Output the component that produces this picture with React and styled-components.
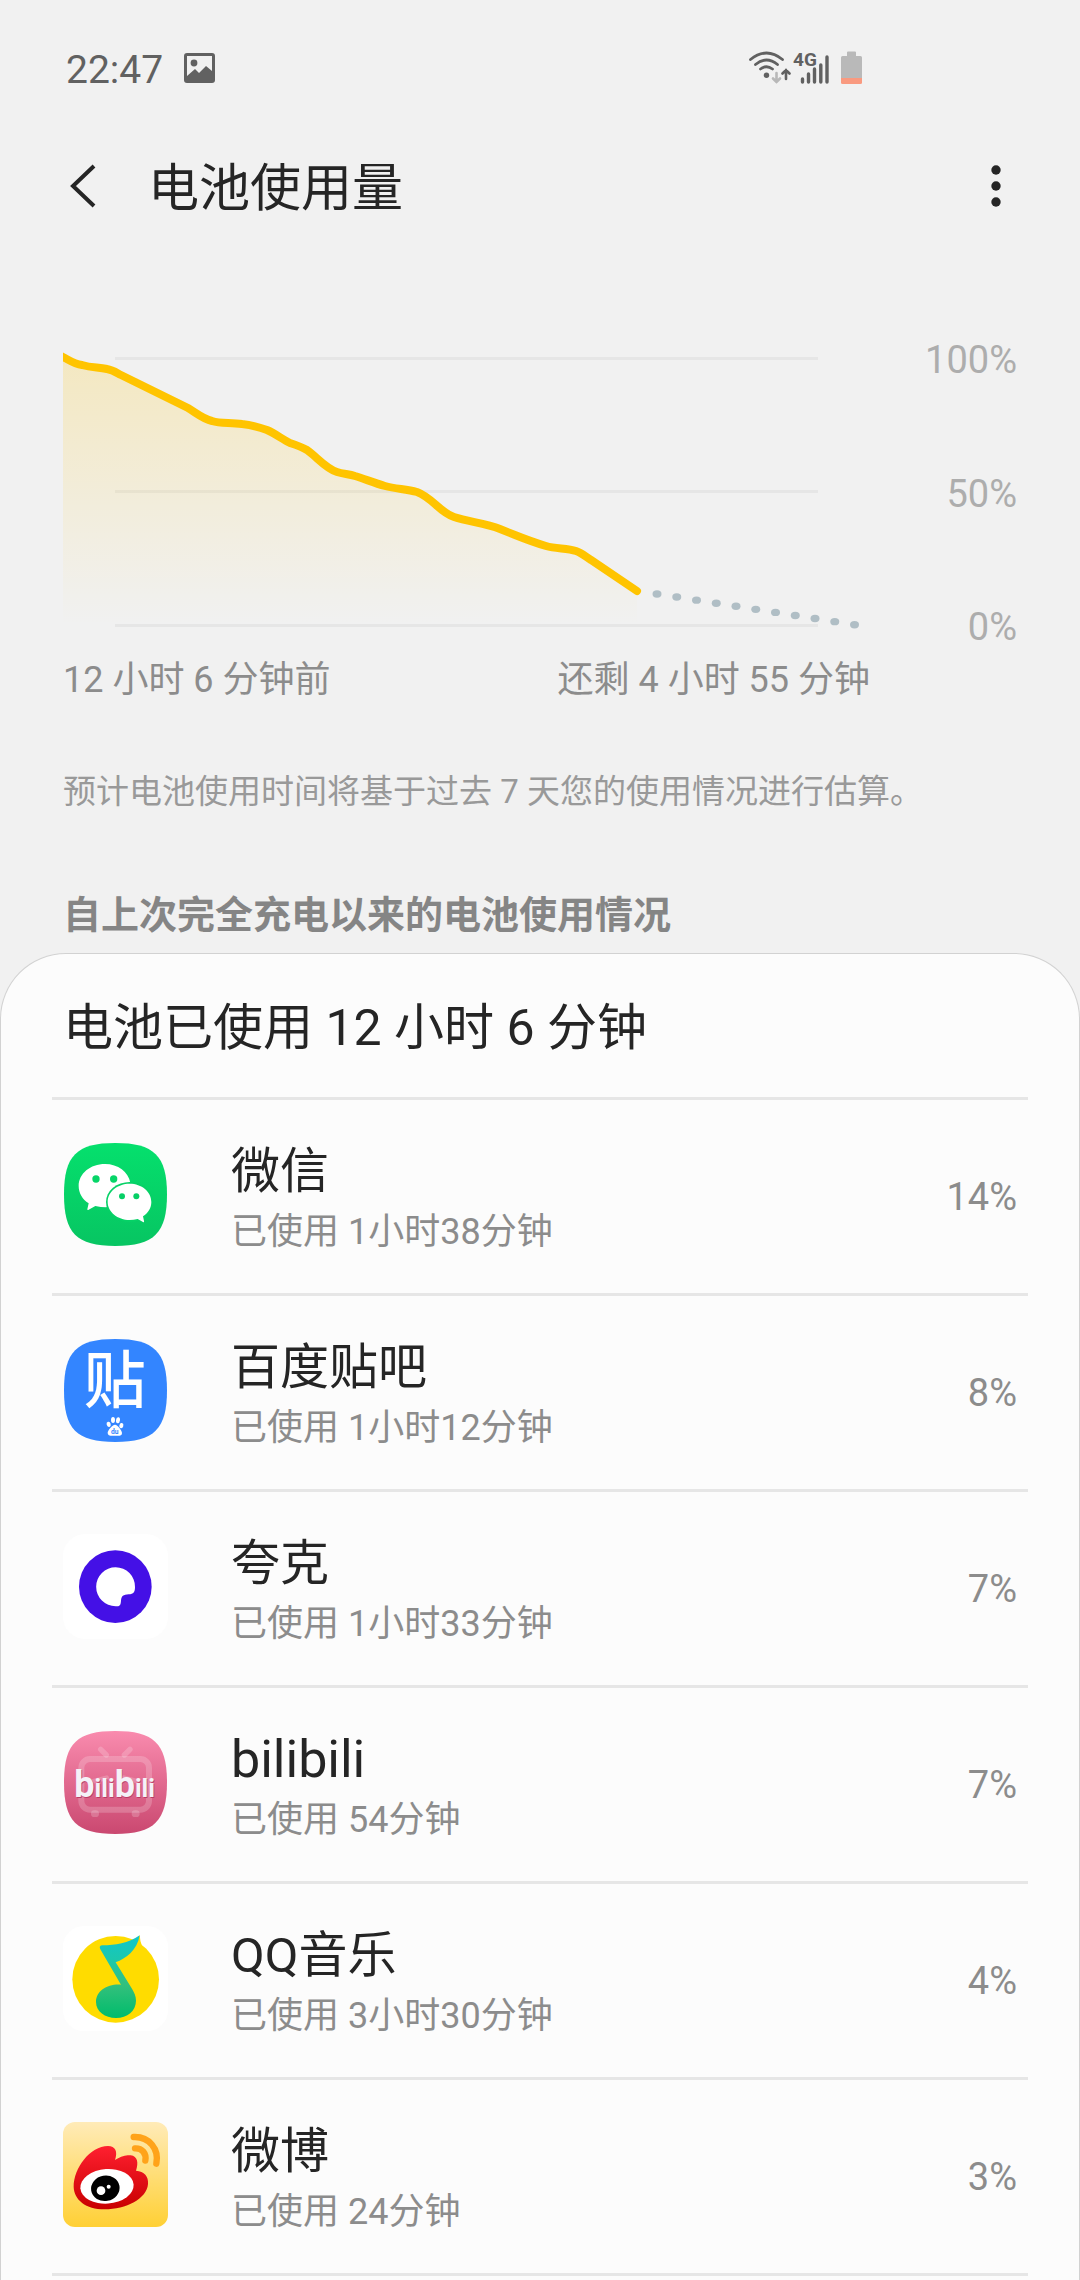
import React from "react";
import styled, { createGlobalStyle } from "styled-components";

const GlobalStyle = createGlobalStyle`
  * { box-sizing: border-box; }
  body {
    margin: 0;
    background: #f1f1f1;
    color: #252525;
    font-family: Roboto, "Noto Sans CJK SC", sans-serif;
  }
  h1, h2, h3, p, ul { margin: 0; padding: 0; font-weight: 400; }
  button {
    border: 0;
    padding: 0;
    background: none;
    color: inherit;
    font: inherit;
    text-align: left;
    cursor: pointer;
  }
  svg { display: block; }
`;

const Page = styled.div`
  display: flex;
  flex-direction: column;
  min-height: 100vh;
`;

const StatusBar = styled.header`
  display: flex;
  align-items: center;
  justify-content: space-between;
  height: 136px;
  padding: 0 218px 0 66px;
  color: #616161;
`;

const StatusGroup = styled.div`
  display: flex;
  align-items: center;
  gap: ${(p) => p.$gap}px;
`;

const Clock = styled.time`
  padding-top: 4px;
  font-size: 39px;
  line-height: 48px;
`;

const TitleBar = styled.div`
  display: flex;
  align-items: center;
  height: 100px;
  padding: 0 64px;
`;

const IconButton = styled.button`
  display: flex;
  align-items: center;
  justify-content: ${(p) => (p.$end ? "flex-end" : "flex-start")};
  width: 84px;
  height: 84px;
`;

const Title = styled.h1`
  flex: 1;
  padding: 6px 0 0 0;
  font-size: 51px;
  line-height: 64px;
`;

const ChartSection = styled.section`
  display: grid;
  grid-template-columns: minmax(0, 1fr) 147px;
  row-gap: 10px;
  padding: 105px 63px 0;
`;

const Scale = styled.div`
  display: flex;
  flex-direction: column;
  justify-content: space-between;
  align-items: flex-end;
  color: #adadad;
  font-size: 38px;
  line-height: 38px;
`;

const Range = styled.div`
  display: flex;
  justify-content: space-between;
  color: #8c8c8c;
  font-size: 36px;
  line-height: 48px;
`;

const Note = styled.p`
  padding: 64px 63px 0;
  color: #999999;
  font-size: 33px;
  line-height: 48px;
`;

const SectionTitle = styled.h2`
  padding: 75px 63px 14px;
  color: #858585;
  font-size: 38px;
  font-weight: 700;
  line-height: 48px;
`;

const Card = styled.section`
  flex: 1;
  padding: 0 51px;
  border: 1px solid #d2d2d2;
  border-bottom: 0;
  border-radius: 66px 66px 0 0;
  background: #fcfcfc;
`;

const CardTitle = styled.h3`
  padding: 42px 11px 37px;
  font-size: 50px;
  line-height: 64px;
`;

const AppList = styled.ul`
  list-style: none;
  border-top: 3px solid #e6e6e6;
`;

const AppItem = styled.li`
  border-bottom: 3px solid #e6e6e6;
`;

const AppRow = styled.button`
  display: flex;
  align-items: center;
  width: 100%;
  height: 193px;
  padding: 0 11px;
`;

const AppIcon = styled.svg`
  flex: none;
  width: 105px;
  height: 105px;
  margin: 0 63px 4px 0;
`;

const AppText = styled.span`
  display: flex;
  flex: 1;
  flex-direction: column;
  padding-top: 7px;
`;

const AppName = styled.span`
  font-size: ${(p) => (p.$latin ? 52 : 49)}px;
  line-height: 64px;
`;

const AppTime = styled.span`
  color: #8c8c8c;
  font-size: 36px;
  line-height: 56px;
`;

const Percent = styled.span`
  color: #8c8c8c;
  font-size: 38px;
  line-height: 48px;
`;

const LINE =
  "M55 353 L63 357 C69 360 74 364 82 365 C92 368 98 367 107 369 C113 370 117 373 121 375 L188 408 C195 412 203 419 212 421 C221 424 231 422 242 424 C252 425 259 427 267 430 C276 434 282 439 290 443 C296 445 302 447 307 450 C317 457 325 468 337 472 C343 474 349 474 355 476 C365 479 374 483 385 486 C396 489 406 489 417 492 C433 498 439 512 454 517 C469 522 485 523 500 529 L515 535 C525 539 536 543 546 546 C556 549 567 548 576 551 C582 553 586 557 591 560 L637 591";

function UsageChart() {
  const dots = Array.from({ length: 11 }, (_, i) => i);
  return (
    <svg viewBox="63 341 807 305" width="100%" role="img" aria-label="电池使用量">
      <defs>
        <linearGradient id="fill" gradientUnits="userSpaceOnUse" x1="0" y1="357" x2="0" y2="625">
          <stop offset="0" stopColor="#ffc400" stopOpacity="0.2" />
          <stop offset="1" stopColor="#ffc400" stopOpacity="0" />
        </linearGradient>
      </defs>
      <path d="M115 358.5H818M115 491.5H818M115 625.5H818" stroke="#e6e6e6" strokeWidth="3" />
      <path d={`${LINE}V625H55Z`} fill="url(#fill)" />
      {dots.map((i) => (
        <ellipse key={i} cx={657 + i * 19.75} cy={594 + i * 3.07} rx="4.5" ry="3.7" fill="#b0bec5" />
      ))}
      <path d={LINE} fill="none" stroke="#ffc400" strokeWidth="8" strokeLinecap="round" />
    </svg>
  );
}

const SQUIRCLE = "M0 154C0 38 38 0 154 0S309 38 309 154S271 309 154 309S0 271 0 154Z";

function WeChatIcon() {
  return (
    <AppIcon viewBox="69 66 315 315" aria-hidden="true">
      <defs>
        <linearGradient id="wx" x1="0" y1="0" x2="0" y2="1">
          <stop offset="0" stopColor="#05e06d" />
          <stop offset="1" stopColor="#07c562" />
        </linearGradient>
      </defs>
      <path d={SQUIRCLE} transform="translate(72 69)" fill="url(#wx)" />
      <path
        d="M195 132C151 132 116 161 116 198C116 219 127 238 146 250L142 268Q142 272 146 269L166 258Q182 262 199 262L271 188C265 156 234 132 195 132Z"
        fill="#fff"
      />
      <circle cx="168" cy="177" r="11" fill="#06d568" />
      <circle cx="221" cy="177" r="11" fill="#06d568" />
      <ellipse cx="269" cy="246" rx="71" ry="60" fill="#06d166" />
      <path
        d="M269 191C233 191 203 215 203 246C203 276 233 300 269 300Q281 300 293 297L309 306Q313 308 312 303L309 289C325 279 334 263 334 246C334 215 305 191 269 191Z"
        fill="#fff"
      />
      <circle cx="246" cy="229" r="9" fill="#06cf66" />
      <circle cx="289" cy="229" r="9" fill="#06cf66" />
    </AppIcon>
  );
}

function TiebaIcon() {
  return (
    <AppIcon viewBox="69 84 315 315" aria-hidden="true">
      <path d={SQUIRCLE} transform="translate(72 87)" fill="#3385ff" />
      <text x="224" y="279" textAnchor="middle" fontSize="186" fontWeight="500" fill="#fff">
        贴
      </text>
      <g fill="#fff">
        <ellipse cx="206" cy="343" rx="6" ry="8" transform="rotate(-15 206 343)" />
        <ellipse cx="219" cy="330" rx="6" ry="9" />
        <ellipse cx="234" cy="331" rx="6" ry="9" transform="rotate(8 234 331)" />
        <ellipse cx="244" cy="347" rx="6" ry="8" transform="rotate(15 244 347)" />
        <path d="M225 344C233 344 246 362 246 369C246 378 238 378 225 377C211 378 203 377 203 369C203 361 217 344 225 344Z" />
      </g>
      <text x="224" y="373" textAnchor="middle" fontSize="20" fontWeight="700" fill="#3385ff">
        du
      </text>
    </AppIcon>
  );
}

function QuarkIcon() {
  return (
    <AppIcon viewBox="69 71 315 315" aria-hidden="true">
      <rect x="69" y="71" width="315" height="315" rx="66" fill="#fff" />
      <circle cx="226" cy="229" r="109" fill="#4410e6" />
      <path
        d="M227 171A58 58 0 0 1 285 230C285 246 281 251 266 252C250 253 244 257 243 271C242 284 240 288 227 288A58 58 0 0 1 227 171Z"
        fill="#fff"
      />
    </AppIcon>
  );
}

function BilibiliIcon() {
  return (
    <AppIcon viewBox="69 60 315 315" aria-hidden="true">
      <defs>
        <linearGradient id="bili" x1="0" y1="0" x2="0" y2="1">
          <stop offset="0" stopColor="#f98bae" />
          <stop offset="1" stopColor="#ca4870" />
        </linearGradient>
      </defs>
      <path d={SQUIRCLE} transform="translate(72 63)" fill="url(#bili)" />
      <g stroke="#fff" strokeOpacity="0.2" fill="none" strokeLinecap="round">
        <rect x="124" y="147" width="203" height="152" rx="26" strokeWidth="18" />
        <path d="M182 118L199 135M270 118L253 135" strokeWidth="16" />
        <path d="M163 311H167M285 311H289" strokeWidth="20" />
        <path d="M160 214L200 203M252 203L292 214" strokeWidth="14" />
      </g>
      <g fontWeight="700" textAnchor="middle">
        <text x="226" y="264" fill="#b83d66">
          <tspan fontSize="108">b</tspan><tspan fontSize="76">ili</tspan>
          <tspan fontSize="108">b</tspan><tspan fontSize="76">ili</tspan>
        </text>
        <text x="224" y="260" fill="#f4f2f8">
          <tspan fontSize="108">b</tspan><tspan fontSize="76">ili</tspan>
          <tspan fontSize="108">b</tspan><tspan fontSize="76">ili</tspan>
        </text>
      </g>
    </AppIcon>
  );
}

function QQMusicIcon() {
  return (
    <AppIcon viewBox="69 78 315 315" aria-hidden="true">
      <defs>
        <linearGradient id="qq" x1="0" y1="0" x2="0" y2="1">
          <stop offset="0" stopColor="#10c6cc" />
          <stop offset="0.3" stopColor="#1cc8ac" />
          <stop offset="0.6" stopColor="#33c07c" />
          <stop offset="1" stopColor="#00bc6c" />
        </linearGradient>
      </defs>
      <rect x="69" y="78" width="315" height="315" rx="62" fill="#fff" />
      <circle cx="227" cy="238" r="130" fill="#ffdc00" />
      <path d="M299 106Q300 124 306 138L280 125Z" fill="#ffdc00" />
      <path
        d="M299 106C265 130 225 136 188 136Q175 137 181 148L243 254C203 251 168 272 168 306C168 335 195 354 228 354C262 354 288 332 288 302C288 288 283 278 276 266L227 187C258 176 292 150 299 106Z"
        fill="url(#qq)"
      />
    </AppIcon>
  );
}

function WeiboIcon() {
  return (
    <AppIcon viewBox="69 66 315 315" aria-hidden="true">
      <defs>
        <linearGradient id="wbBg" x1="0" y1="0" x2="0" y2="1">
          <stop offset="0" stopColor="#ffebb8" />
          <stop offset="1" stopColor="#ffd035" />
        </linearGradient>
        <linearGradient id="wbRed" x1="0" y1="0" x2="0" y2="1">
          <stop offset="0" stopColor="#ff2030" />
          <stop offset="1" stopColor="#c80000" />
        </linearGradient>
      </defs>
      <rect x="69" y="66" width="315" height="315" rx="36" fill="url(#wbBg)" />
      <path
        d="M101 260C101 205 150 138 204 138C226 138 234 154 225 180C246 167 261 165 272 166C293 169 296 188 288 212C313 214 326 229 324 252C321 296 258 328 194 328C137 328 102 299 101 260Z"
        fill="url(#wbRed)"
      />
      <ellipse cx="201" cy="259" rx="80" ry="52" transform="rotate(-4 201 259)" fill="#fff" />
      <ellipse cx="196" cy="265" rx="43" ry="38" transform="rotate(-10 196 265)" fill="#000" />
      <circle cx="183" cy="272" r="13" fill="#fff" />
      <circle cx="206" cy="260" r="6" fill="#fff" />
      <g fill="none" stroke="#ffa31a" strokeWidth="19" strokeLinecap="round">
        <path d="M281 111C328 109 358 148 349 191" />
        <path d="M285 145C306 144 320 160 316 182" />
      </g>
    </AppIcon>
  );
}

function PictureIcon() {
  return (
    <svg width="32" height="30" viewBox="0 0 32 30" aria-hidden="true">
      <path
        fillRule="evenodd"
        d="M3 0H28Q31 0 31 3V27Q31 30 28 30H3Q0 30 0 27V3Q0 0 3 0ZM3 3V23L11 16L15 20L22 13L28 18V3Z"
        fill="#616161"
      />
      <circle cx="10" cy="10" r="3.4" fill="#616161" />
    </svg>
  );
}

function WifiIcon() {
  return (
    <svg width="42" height="34" viewBox="0 0 42 34" fill="none" strokeLinecap="round" aria-hidden="true">
      <path d="M1.5 8.5Q17.5-4.5 33.5 8.5M6.5 13.5Q17.5 4.5 28.5 13.5M11.5 18Q17.5 13.5 23.5 18" stroke="#616161" strokeWidth="2.8" />
      <circle cx="17.5" cy="24.3" r="2.7" fill="#616161" />
      <path d="M27.5 22V31M24 27.5L27.5 31L31 27.5" stroke="#b8b8b8" strokeWidth="2.6" />
      <path d="M37 28V19M33.5 22.5L37 19L40.5 22.5" stroke="#616161" strokeWidth="2.6" />
    </svg>
  );
}

function SignalIcon() {
  return (
    <svg width="36" height="42" viewBox="0 -4 36 42" aria-hidden="true">
      <text x="0" y="15" fontSize="19" fontWeight="700" fill="#616161">
        4G
      </text>
      <path
        d="M9.5 28V31M15.5 23V31M21.5 18V31M27.8 14V31M34 6V31"
        stroke="#616161"
        strokeWidth="3.4"
        strokeLinecap="round"
      />
    </svg>
  );
}

function BatteryIcon() {
  return (
    <svg width="21" height="34" viewBox="0 0 21 34" aria-hidden="true">
      <path d="M6 1.5Q6 0.5 7 0.5H14Q15 0.5 15 1.5V5H19.5Q21 5 21 6.5V28H0V6.5Q0 5 1.5 5H6Z" fill="#b9b9b9" />
      <path d="M0 27H21V31.5Q21 33 19.5 33H1.5Q0 33 0 31.5Z" fill="#f99a80" />
    </svg>
  );
}

const APPS = [
  { name: "微信", time: "1小时38分钟", percent: 14, Icon: WeChatIcon },
  { name: "百度贴吧", time: "1小时12分钟", percent: 8, Icon: TiebaIcon },
  { name: "夸克", time: "1小时33分钟", percent: 7, Icon: QuarkIcon },
  { name: "bilibili", time: "54分钟", percent: 7, Icon: BilibiliIcon, latin: true },
  { name: "QQ音乐", time: "3小时30分钟", percent: 4, Icon: QQMusicIcon },
  { name: "微博", time: "24分钟", percent: 3, Icon: WeiboIcon },
];

export default function App() {
  return (
    <Page>
      <GlobalStyle />
      <StatusBar>
        <StatusGroup $gap={21}>
          <Clock>22:47</Clock>
          <PictureIcon />
        </StatusGroup>
        <StatusGroup $gap={2}>
          <WifiIcon />
          <StatusGroup $gap={12}>
            <SignalIcon />
            <BatteryIcon />
          </StatusGroup>
        </StatusGroup>
      </StatusBar>

      <TitleBar>
        <IconButton aria-label="返回">
          <svg width="38" height="44" viewBox="0 0 38 44" fill="none" aria-hidden="true">
            <path d="M30 2L9 22L30 42" stroke="#252525" strokeWidth="4" />
          </svg>
        </IconButton>
        <Title>电池使用量</Title>
        <IconButton $end aria-label="更多选项">
          <svg width="40" height="44" viewBox="0 0 40 44" fill="#252525" aria-hidden="true">
            <circle cx="20" cy="6" r="4.7" />
            <circle cx="20" cy="22" r="4.7" />
            <circle cx="20" cy="38" r="4.7" />
          </svg>
        </IconButton>
      </TitleBar>

      <main>
        <ChartSection>
          <UsageChart />
          <Scale>
            <span>100%</span>
            <span>50%</span>
            <span>0%</span>
          </Scale>
          <Range>
            <span>12 小时 6 分钟前</span>
            <span>还剩 4 小时 55 分钟</span>
          </Range>
        </ChartSection>
        <Note>预计电池使用时间将基于过去 7 天您的使用情况进行估算。</Note>
        <SectionTitle>自上次完全充电以来的电池使用情况</SectionTitle>
      </main>

      <Card>
        <CardTitle>电池已使用 12 小时 6 分钟</CardTitle>
        <AppList>
          {APPS.map(({ name, time, percent, Icon, latin }) => (
            <AppItem key={name}>
              <AppRow>
                <Icon />
                <AppText>
                  <AppName $latin={latin}>{name}</AppName>
                  <AppTime>已使用 {time}</AppTime>
                </AppText>
                <Percent>{percent}%</Percent>
              </AppRow>
            </AppItem>
          ))}
        </AppList>
      </Card>
    </Page>
  );
}
